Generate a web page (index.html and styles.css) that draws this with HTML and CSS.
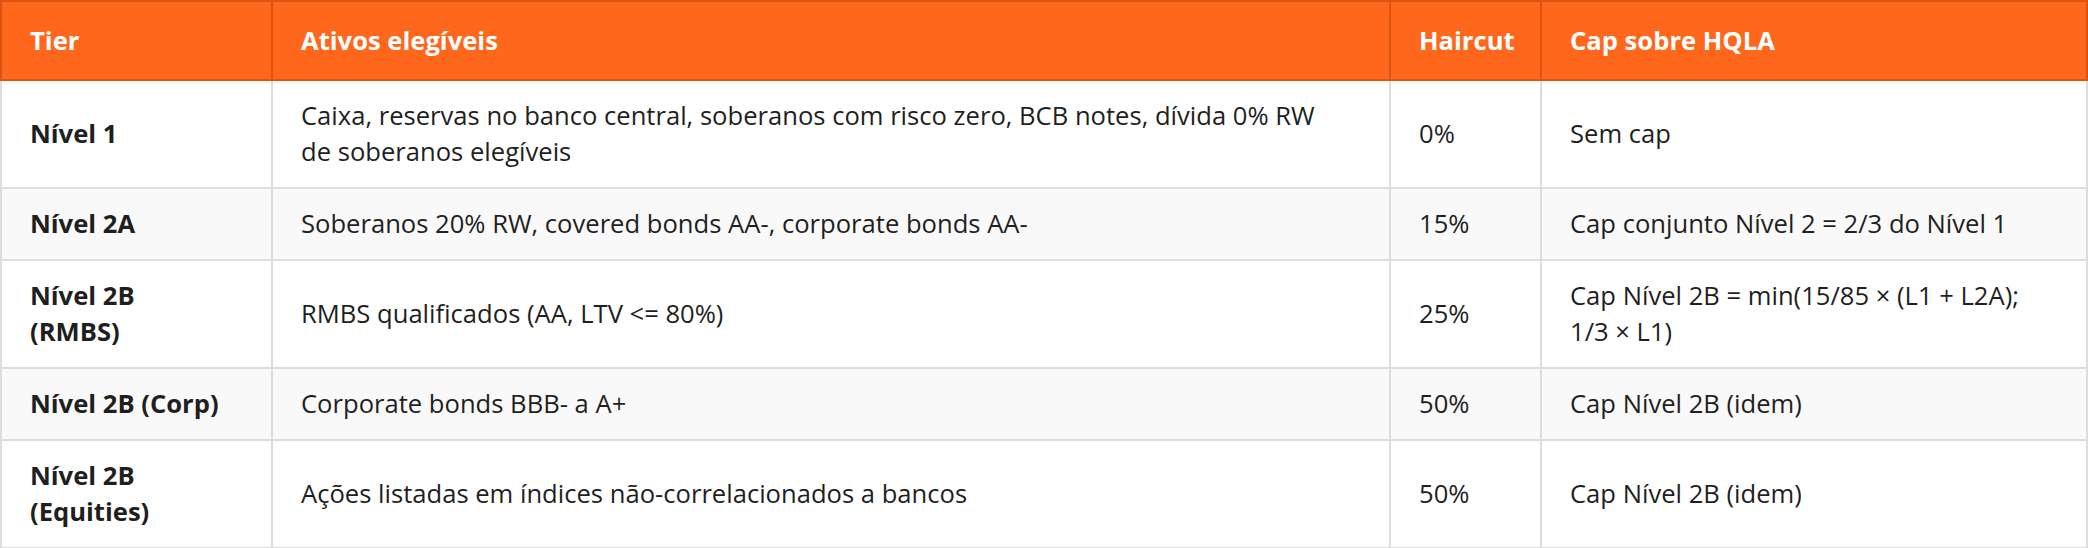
FILE: index.html
```html
<!DOCTYPE html>
<html lang="pt">
<head>
<meta charset="utf-8">
<title>HQLA</title>
<link rel="stylesheet" href="styles.css">
</head>
<body>
<table class="hqla">
  <colgroup>
    <col class="c-tier">
    <col class="c-assets">
    <col class="c-haircut">
    <col class="c-cap">
  </colgroup>
  <thead>
    <tr>
      <th>Tier</th>
      <th>Ativos elegíveis</th>
      <th>Haircut</th>
      <th>Cap sobre HQLA</th>
    </tr>
  </thead>
  <tbody>
    <tr>
      <td class="tier">Nível 1</td>
      <td class="assets">Caixa, reservas no banco central, soberanos com risco zero, BCB notes, dívida 0% RW de soberanos elegíveis</td>
      <td>0%</td>
      <td class="cap">Sem cap</td>
    </tr>
    <tr>
      <td class="tier">Nível 2A</td>
      <td class="assets">Soberanos 20% RW, covered bonds AA-, corporate bonds AA-</td>
      <td>15%</td>
      <td class="cap">Cap conjunto Nível 2 = 2/3 do Nível 1</td>
    </tr>
    <tr>
      <td class="tier">Nível 2B (RMBS)</td>
      <td class="assets">RMBS qualificados (AA, LTV &lt;= 80%)</td>
      <td>25%</td>
      <td class="cap">Cap Nível 2B = min(15/85 × (L1 + L2A); 1/3 × L1)</td>
    </tr>
    <tr>
      <td class="tier">Nível 2B (Corp)</td>
      <td class="assets">Corporate bonds BBB- a A+</td>
      <td>50%</td>
      <td class="cap">Cap Nível 2B (idem)</td>
    </tr>
    <tr>
      <td class="tier">Nível 2B (Equities)</td>
      <td class="assets">Ações listadas em índices não-correlacionados a bancos</td>
      <td>50%</td>
      <td class="cap">Cap Nível 2B (idem)</td>
    </tr>
  </tbody>
</table>
</body>
</html>
```

FILE: styles.css
```css
html, body {
  margin: 0;
  padding: 0;
  background: #ffffff;
}

body {
  font-family: "Open Sans", "Noto Sans", "DejaVu Sans", sans-serif;
  font-size: 25.6px;
  line-height: 36px;
  color: #1f1f1f;
}

.hqla {
  width: 2088px;
  table-layout: fixed;
  border-collapse: separate;
  border-spacing: 0;
}

.c-tier { width: 273px; }
.c-assets { width: 1118px; }
.c-haircut { width: 151px; }
.c-cap { width: 546px; }

.hqla th,
.hqla td {
  text-align: left;
  vertical-align: middle;
  padding: 17px 28px;
  border-right: 2px solid #dddddd;
  border-bottom: 2px solid #dddddd;
}

.hqla th:first-child,
.hqla td:first-child {
  border-left: 2px solid #dddddd;
}

.hqla th {
  background: #ff681c;
  color: #ffffff;
  font-weight: 700;
  padding-top: 21px;
  padding-bottom: 20px;
  border-top: 2px solid #e0520f;
  border-right-color: #e0520f;
  border-bottom-color: #e0520f;
}

.hqla th:first-child {
  border-left-color: #e0520f;
}

.hqla tbody tr:nth-child(even) td {
  background: #f9f9f9;
}

.hqla .tier {
  font-weight: 700;
  padding-right: 46px;
}

.hqla .assets {
  padding-right: 52px;
}

.hqla .cap {
  padding-right: 36px;
}
```
